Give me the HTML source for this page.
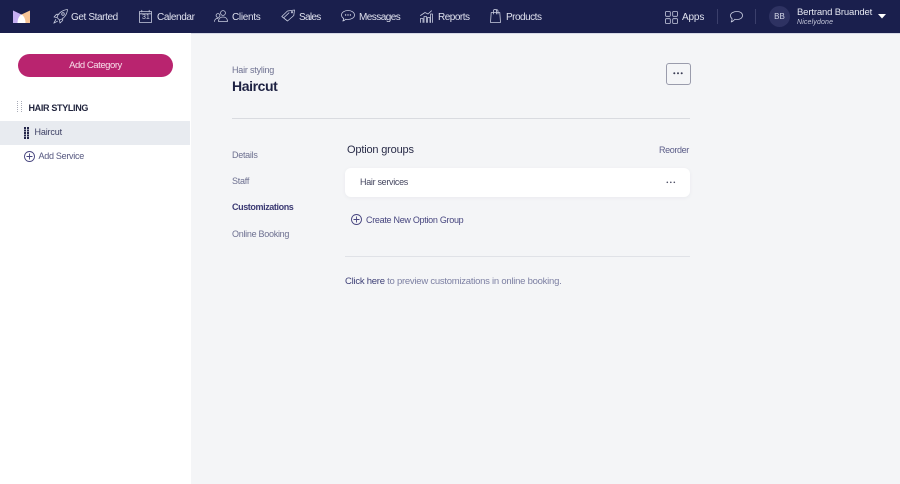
<!DOCTYPE html>
<html><head><meta charset="utf-8"><style>
html,body{margin:0;padding:0}
body{width:900px;height:484px;overflow:hidden;background:#f4f5f7;position:relative;font-family:"Liberation Sans",sans-serif}
.t{position:absolute;white-space:nowrap;line-height:14px}
.n{color:#dfe1ee;font-size:10px;top:10px}
svg{position:absolute;overflow:visible}
.i{fill:none;stroke:#c9cde0;stroke-width:.8;stroke-linecap:round;stroke-linejoin:round}
.p{fill:none;stroke:#47457f;stroke-width:.9}
</style></head><body>
<div style="position:absolute;left:0;top:0;width:900px;height:33px;background:#1a1f4d"></div>
<div style="position:absolute;left:0;top:33px;width:900px;height:1px;background:#d6d9e6"></div>
<div style="position:absolute;left:0;top:33px;width:191px;height:451px;background:#fff"></div>

<svg style="left:13px;top:10px" width="17" height="13" viewBox="0 0 17 13"><path d="M0 .5 8.500 4.500V13H0Z" fill="#c5aef2"/><path d="M17 .5 8.500 4.500V13H17Z" fill="#f6c496"/><path d="M4.500 13C4.500 8.500 6.500 5.500 8.500 4.500 10.500 5.500 12.500 8.500 12.500 13Z" fill="#fff"/></svg>

<svg style="left:53px;top:9px" width="15" height="15" viewBox="0 0 15 15"><path class="i" d="M4 8.500C5 4.500 9 1 14.500.5 14 6 10.500 10 6.500 11ZM4 8.500 1 8 3.500 5.300 6 5.300M6.500 11 7 14 9.700 11.500 9.700 9M2.800 10.500 .8 14.200 4.500 12.200"/><circle class="i" cx="10" cy="5" r="1.300"/></svg>
<div class="t n" style="left:71px;top:10.500px;letter-spacing:-.39px">Get Started</div>
<svg style="left:139px;top:10px" width="13" height="13" viewBox="0 0 13 13"><path class="i" d="M.5 1.500H12.500V12.500H.5ZM.5 3.800H12.500"/><path class="i" d="M2.800.3V2M10.200.3V2"/></svg>
<div class="t" style="left:142px;top:12.500px;font-size:7px;line-height:9px;color:#d5d8e8">31</div>
<div class="t n" style="left:157px;top:10.500px;letter-spacing:-.38px">Calendar</div>
<svg style="left:214px;top:10px" width="14" height="12" viewBox="0 0 14 12"><circle class="i" cx="9" cy="3" r="2.400"/><circle class="i" cx="4" cy="5.500" r="1.900"/><path class="i" d="M4.500 11.500C4.500 8.500 6.500 7 9 7 11.500 7 13.500 8.500 13.500 11.500ZM.5 11.500C.5 9.500 2 8.300 4 8.300"/></svg>
<div class="t n" style="left:232px;top:10.500px;letter-spacing:-.3px">Clients</div>
<svg style="left:281px;top:9px" width="14" height="13" viewBox="0 0 14 13"><path class="i" d="M.8 7.500 6.500 2 13.500 1 12.800 6.500 6.500 12Z"/><path class="i" d="M3 8.500 8 3.800"/><circle class="i" cx="11" cy="3.200" r=".7"/></svg>
<div class="t n" style="left:299px;top:10.500px;letter-spacing:-.7px">Sales</div>
<svg style="left:341px;top:10px" width="14" height="12" viewBox="0 0 14 12"><path class="i" d="M7 .5C10.600.5 13.500 2.400 13.500 5 13.500 7.600 10.600 9.500 7 9.500 6.200 9.500 5.500 9.400 4.800 9.200 4 10 3 10.800 1.800 11 2.500 10.200 2.800 9.300 2.700 8.500 1.300 7.600.5 6.400.5 5 .5 2.400 3.400.5 7 .5Z"/><circle cx="4.600" cy="5" r=".7" fill="#d5d8e8"/><circle cx="7" cy="5" r=".7" fill="#d5d8e8"/><circle cx="9.400" cy="5" r=".7" fill="#d5d8e8"/></svg>
<div class="t n" style="left:359px;top:10.500px;letter-spacing:-.55px">Messages</div>
<svg style="left:420px;top:10px" width="13" height="13" viewBox="0 0 13 13"><path class="i" d="M.5 12.500V8.500H3V12.500M4 12.500V6.500H6.500V12.500M7.500 12.500V7.500H10V12.500M10.500 12.500V4H12.500V12.500M.5 5.500 5 2.500 8 4 11.500.8"/></svg>
<div class="t n" style="left:438px;top:10.500px;letter-spacing:-.5px">Reports</div>
<svg style="left:490px;top:9px" width="11" height="14" viewBox="0 0 11 14"><path class="i" d="M1.200 3.500H9.800L10.500 13.500H.5ZM3.500 5V1.800C3.500.6 4.300.4 5 .4 6 .4 6.500 1 6.500 1.800V5M6 .8C7 .4 8 1 8 2V5"/></svg>
<div class="t n" style="left:506px;top:10.500px;letter-spacing:-.5px">Products</div>

<svg style="left:665px;top:11px" width="13" height="13" viewBox="0 0 13 13"><rect class="i" x=".5" y=".5" width="4.800" height="4.800" rx=".8"/><rect class="i" x="7.700" y=".5" width="4.800" height="4.800" rx=".8"/><rect class="i" x=".5" y="7.700" width="4.800" height="4.800" rx=".8"/><rect class="i" x="7.700" y="7.700" width="4.800" height="4.800" rx=".8"/></svg>
<div class="t n" style="left:682px;top:10.500px;letter-spacing:-.15px">Apps</div>
<div style="position:absolute;left:717px;top:9px;width:1px;height:15px;background:#3b3f6b"></div>
<svg style="left:730px;top:11px" width="13" height="12" viewBox="0 0 13 12"><path class="i" d="M7 .5C10.200.5 12.500 2.100 12.500 4.500 12.500 6.900 10.200 8.500 7 8.500 6.200 8.500 5.500 8.400 4.900 8.200 4 9.300 2.800 10.400 1.200 11 1.900 9.800 2.200 8.800 2.100 7.700 1 6.900.5 5.800.5 4.500.5 2.100 3.500.5 7 .5Z"/></svg>
<div style="position:absolute;left:755px;top:9px;width:1px;height:15px;background:#3b3f6b"></div>
<div style="position:absolute;left:769px;top:6px;width:21px;height:21px;border-radius:50%;background:#2e3262"></div>
<div class="t" style="left:769px;top:10px;width:21px;text-align:center;font-size:8px;color:#d5d8e8">BB</div>
<div class="t" style="left:797px;top:5.500px;font-size:9.500px;color:#e6e8f2;letter-spacing:-.15px">Bertrand Bruandet</div>
<div class="t" style="left:797px;top:15.500px;font-size:7px;color:#c6c9dc;font-style:italic;letter-spacing:.15px">Nicelydone</div>
<svg style="left:878px;top:14px" width="8" height="5" viewBox="0 0 8 5"><path d="M0 0H8L4 4.500Z" fill="#fff"/></svg>

<div style="position:absolute;left:18px;top:54px;width:155px;height:23px;border-radius:12px;background:#b9246f"></div>
<div class="t" style="left:18px;top:58.500px;width:155px;text-align:center;font-size:9.500px;color:#f8dfea;letter-spacing:-.45px">Add Category</div>
<svg style="left:17px;top:101px" width="6" height="12" viewBox="0 0 6 12" fill="#a9acb8"><rect x="0" y="0" width="1" height="1"/><rect x="4" y="0" width="1" height="1"/><rect x="0" y="2" width="1" height="1"/><rect x="4" y="2" width="1" height="1"/><rect x="0" y="4" width="1" height="1"/><rect x="4" y="4" width="1" height="1"/><rect x="0" y="6" width="1" height="1"/><rect x="4" y="6" width="1" height="1"/><rect x="0" y="8" width="1" height="1"/><rect x="4" y="8" width="1" height="1"/><rect x="0" y="10" width="1" height="1"/><rect x="4" y="10" width="1" height="1"/></svg>
<div class="t" style="left:28.500px;top:100.500px;font-size:9px;font-weight:bold;color:#23263f;letter-spacing:-.33px">HAIR STYLING</div>
<div style="position:absolute;left:0;top:121px;width:190px;height:24px;background:#e8ebf0"></div>
<svg style="left:24px;top:127px" width="6" height="12" viewBox="0 0 6 12" fill="#23264a"><rect x="0" y="0" width="2" height="2"/><rect x="3" y="0" width="2" height="2"/><rect x="0" y="2.500" width="2" height="2"/><rect x="3" y="2.500" width="2" height="2"/><rect x="0" y="5" width="2" height="2"/><rect x="3" y="5" width="2" height="2"/><rect x="0" y="7.500" width="2" height="2"/><rect x="3" y="7.500" width="2" height="2"/><rect x="0" y="10" width="2" height="2"/><rect x="3" y="10" width="2" height="2"/></svg>
<div class="t" style="left:34.500px;top:125px;font-size:9px;color:#3c3f63;letter-spacing:-.15px">Haircut</div>
<svg style="left:24px;top:151px" width="11" height="11" viewBox="0 0 11 11"><circle class="p" cx="5.500" cy="5.500" r="5"/><path class="p" d="M5.500 2.500V8.500M2.500 5.500H8.500"/></svg>
<div class="t" style="left:38.500px;top:149px;font-size:9px;color:#55577f;letter-spacing:-.28px">Add Service</div>

<div class="t" style="left:232px;top:62.500px;font-size:9px;color:#6d7090;letter-spacing:-.2px">Hair styling</div>
<div class="t" style="left:232px;top:78px;font-size:14px;font-weight:bold;line-height:16px;color:#1d2142;letter-spacing:-.4px">Haircut</div>
<div style="position:absolute;left:666px;top:63px;width:23px;height:20px;border:1px solid #9a9cac;border-radius:3px;box-sizing:border-box;width:25px;height:22px"></div>
<svg style="left:673px;top:72px" width="10" height="3" viewBox="0 0 10 3" fill="#3b3d55"><circle cx="1.300" cy="1.300" r="1"/><circle cx="5" cy="1.300" r="1"/><circle cx="8.700" cy="1.300" r="1"/></svg>
<div style="position:absolute;left:232px;top:118px;width:458px;height:1px;background:#d9dbe0"></div>

<div class="t" style="left:232px;top:148px;font-size:9px;color:#6d7090;letter-spacing:-.28px">Details</div>
<div class="t" style="left:232px;top:174px;font-size:9px;color:#6d7090;letter-spacing:-.25px">Staff</div>
<div class="t" style="left:232px;top:200px;font-size:9px;font-weight:bold;color:#3b3a73;letter-spacing:-.4px">Customizations</div>
<div class="t" style="left:232px;top:226.500px;font-size:9px;color:#6d7090;letter-spacing:-.28px">Online Booking</div>

<div class="t" style="left:347px;top:142.500px;font-size:11px;color:#2a2d49;letter-spacing:-.18px">Option groups</div>
<div class="t" style="left:659px;top:142.500px;font-size:9px;color:#5b5d88;letter-spacing:-.37px">Reorder</div>
<div style="position:absolute;left:345px;top:168px;width:345px;height:29px;background:#fff;border-radius:6px;box-shadow:0 1px 4px rgba(30,35,70,.05)"></div>
<div class="t" style="left:360px;top:175px;font-size:9px;color:#44465f;letter-spacing:-.31px">Hair services</div>
<svg style="left:666px;top:181px" width="10" height="3" viewBox="0 0 10 3" fill="#4a4c62"><circle cx="1.300" cy="1.300" r=".8"/><circle cx="4.800" cy="1.300" r=".8"/><circle cx="8.300" cy="1.300" r=".8"/></svg>
<svg style="left:351px;top:214px" width="11" height="11" viewBox="0 0 11 11"><circle class="p" cx="5.500" cy="5.500" r="5"/><path class="p" d="M5.500 2.500V8.500M2.500 5.500H8.500"/></svg>
<div class="t" style="left:366px;top:212.500px;font-size:9px;color:#47467f;letter-spacing:-.29px">Create New Option Group</div>
<div style="position:absolute;left:345px;top:256px;width:345px;height:1px;background:#e0e2e7"></div>
<div class="t" style="left:345px;top:274.500px;font-size:9.500px;color:#7d80a3;letter-spacing:-.25px"><span style="color:#3f4178">Click here</span> to preview customizations in online booking.</div>
</body></html>
